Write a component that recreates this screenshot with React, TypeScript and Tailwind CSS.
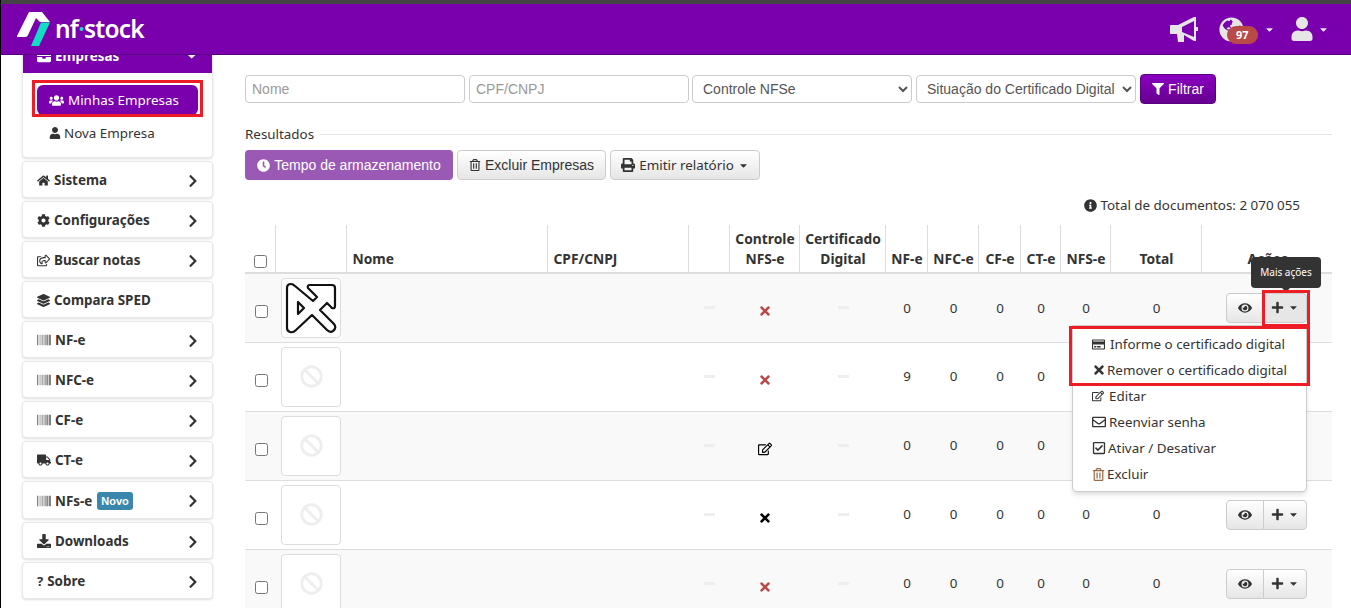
import {
  FaBan,
  FaBarcode,
  FaBriefcase,
  FaCaretDown,
  FaChevronRight,
  FaClock,
  FaCog,
  FaDownload,
  FaEye,
  FaFilter,
  FaGlobeAmericas,
  FaHome,
  FaInfoCircle,
  FaLayerGroup,
  FaPlus,
  FaPrint,
  FaRegCheckSquare,
  FaRegCreditCard,
  FaRegEdit,
  FaRegEnvelope,
  FaRegShareSquare,
  FaRegTrashAlt,
  FaTimes,
  FaTruck,
  FaUser,
  FaUsers,
} from "react-icons/fa";
import type { ReactNode } from "react";

const barcode = <FaBarcode className="text-[14px] text-[#555555]" />;

const menu: { icon: ReactNode; label: string; badge?: boolean; noArrow?: boolean }[] = [
  { icon: <FaHome />, label: "Sistema" },
  { icon: <FaCog />, label: "Configurações" },
  { icon: <FaRegShareSquare />, label: "Buscar notas" },
  { icon: <FaLayerGroup />, label: "Compara SPED", noArrow: true },
  { icon: barcode, label: "NF-e" },
  { icon: barcode, label: "NFC-e" },
  { icon: barcode, label: "CF-e" },
  { icon: <FaTruck className="text-[14px]" />, label: "CT-e" },
  { icon: barcode, label: "NFs-e", badge: true },
  { icon: <FaDownload className="text-[14px]" />, label: "Downloads" },
  { icon: <span className="font-bold">?</span>, label: "Sobre" },
];

const columns = [
  { label: "", w: "w-[30px]" },
  { label: "", w: "w-[71px]" },
  { label: "Nome", w: "w-[201px]", left: true },
  { label: "CPF/CNPJ", w: "w-[141px]", left: true },
  { label: "", w: "w-[41px]" },
  { label: "Controle NFS-e", w: "w-[70px]" },
  { label: "Certificado Digital", w: "w-[86px]" },
  { label: "NF-e", w: "w-[42px]" },
  { label: "NFC-e", w: "w-[51px]" },
  { label: "CF-e", w: "w-[42px]" },
  { label: "CT-e", w: "w-[40px]" },
  { label: "NFS-e", w: "w-[50px]" },
  { label: "Total", w: "w-[91px]" },
  { label: "Ações", w: "w-[131px]" },
];

const rows = [
  { logo: true, control: "red", nfe: 0 },
  { logo: false, control: "red", nfe: 9 },
  { logo: false, control: "edit", nfe: 0 },
  { logo: false, control: "black", nfe: 0 },
  { logo: false, control: "red", nfe: 0 },
];

const menuItems = [
  { icon: <FaRegCreditCard className="text-[13px]" />, label: "Informe o certificado digital", gap: "gap-[5px]" },
  { icon: <FaTimes className="text-[14px]" />, label: "Remover o certificado digital", gap: "gap-[1px]" },
  { icon: <FaRegEdit className="text-[12px]" />, label: "Editar", gap: "gap-[5px]" },
  { icon: <FaRegEnvelope className="text-[14px]" />, label: "Reenviar senha", gap: "gap-[3px]" },
  { icon: <FaRegCheckSquare className="text-[14px]" />, label: "Ativar / Desativar", gap: "gap-[2px]" },
  { icon: <FaRegTrashAlt className="text-[13px] text-[#9a6a45]" />, label: "Excluir", gap: "gap-[2px]" },
];

const Dash = () => <div className="mx-auto h-[3px] w-[11px] bg-[#eeeeee]" />;

const Logo = () => (
  <svg width="34" height="36" viewBox="0 0 34 36">
    <path d="M1 25 L13 1 H26 L34 11 H24 L20 7 L12 24 Q11.5 26 9 26 H1 Z" fill="#ffffff" />
    <path d="M34 11.5 L23 35 H15 L25 11.5 Z" fill="#12dcc4" />
  </svg>
);

const Bullhorn = () => (
  <svg width="28" height="25" viewBox="0 0 28 25" className="mr-[21px]">
    <path
      fillRule="evenodd"
      fill="#e6e6e6"
      d="M0 9 Q0 8 1 8 H8 L24 0 H26 V10 H28 V14 H26 V24 H24 L14 18 V25 H8 L7 17 H1 Q0 17 0 16 Z M24 4 L12 10 V15 L24 20 Z"
    />
  </svg>
);

const Sample = () => (
  <svg width="52" height="52" viewBox="0 0 52 52" fill="none" stroke="#111" strokeWidth="2.2" strokeLinejoin="round">
    <path d="M2 6 Q2 2 6 2 Q8 2 10 4 L28 19 L32 15 L23 6 Q22 3 25 3 H47 Q50 3 50 6 V24 Q50 27 47 26 L42 21 L35 28 L49 42 Q52 46 48 49 Q45 51 42 48 L27 33 L11 48 Q8 51 5 50 Q2 49 2 46 Z" />
    <path d="M13 20 V32 L19 26 Z" />
  </svg>
);

const App = () => {
  return (
    <div className="relative h-[608px] w-[1351px] overflow-hidden border-l border-black bg-white font-['Noto_Sans','Open_Sans',sans-serif] text-[13.4px] text-[#333333]">
      <div className="h-[4px] bg-[#444444]" />
      <header className="relative z-10 flex h-[51px] items-center justify-between border-b border-[#5b0080] bg-[#7a00ad] pl-[15px] pr-[22px]">
        <div className="flex items-center gap-[5px]">
          <Logo />
          <span className="text-[24.5px] font-semibold leading-none tracking-[-0.8px] text-white">
            nf<span className="text-[#12dcc4]">·</span>stock
          </span>
        </div>
        <div className="flex items-center text-[#e6e6e6]">
          <Bullhorn />
          <div className="relative mr-[15px] flex items-center">
            <FaGlobeAmericas className="text-[25px]" />
            <span className="absolute left-[8px] top-[9px] rounded-[9px] bg-[#b94a48] px-[9px] text-[11px] font-bold leading-[18px] text-white">97</span>
            <FaCaretDown className="ml-[20px] text-[11px]" />
          </div>
          <FaUser className="text-[24px]" />
          <FaCaretDown className="ml-[4px] text-[11px]" />
        </div>
      </header>

      <div className="flex">
        <aside className="z-0 ml-[21px] -mt-[23px] flex w-[191px] shrink-0 flex-col gap-[3px]">
          <div className="h-[126px] rounded border border-[#e8e8e8] bg-white shadow-sm">
            <div className="flex h-[40px] items-center justify-between bg-[#7a00ad] px-[14px] pt-[6px] font-bold text-white">
              <span className="flex items-center gap-[4px]">
                <FaBriefcase className="text-[14px]" />
                Empresas
              </span>
              <FaCaretDown />
            </div>
            <div className="mx-[14px] mt-[12px] flex h-[30px] items-center gap-[4px] rounded-md bg-[#7a00ad] pl-[12px] text-white">
              <FaUsers className="text-[15px]" />
              Minhas Empresas
            </div>
            <div className="mt-[3px] flex h-[30px] items-center gap-[3px] pl-[26px]">
              <FaUser className="text-[12px]" />
              Nova Empresa
            </div>
          </div>
          {menu.map((item) => (
            <div
              key={item.label}
              className={`flex ${item.badge ? "h-[38px]" : "h-[37px]"} items-center justify-between rounded border border-[#e8e8e8] bg-white pl-[14px] pr-[12px] pt-[2px] font-bold shadow-sm`}
            >
              <span className="flex items-center gap-[4px]">
                <span className="text-[13px]">{item.icon}</span>
                {item.label}
                {item.badge && (
                  <span className="ml-[1px] rounded-[3px] bg-[#3a87ad] px-[4px] font-['Liberation_Sans',sans-serif] text-[11px] font-bold leading-[18px] text-white">Novo</span>
                )}
              </span>
              {!item.noArrow && <FaChevronRight className="text-[14px]" />}
            </div>
          ))}
        </aside>

        <main className="ml-[32px] w-[1087px] shrink-0 pt-[20px]">
          <div className="flex h-[28px] gap-[4px] font-['Liberation_Sans',sans-serif] text-sm">
            <input placeholder="Nome" className="h-[28px] w-[220px] rounded border border-[#cccccc] px-[6px] placeholder:text-[#999999]" />
            <input placeholder="CPF/CNPJ" className="h-[28px] w-[220px] rounded border border-[#cccccc] px-[6px] placeholder:text-[#999999]" />
            <select className="-ml-px h-[28px] w-[220px] rounded border border-[#cccccc] bg-white pl-[6px] text-[#555555]">
              <option>Controle NFSe</option>
            </select>
            <select className="h-[28px] w-[220px] rounded border border-[#cccccc] bg-white pl-[6px] text-[#555555]">
              <option>Situação do Certificado Digital</option>
            </select>
            <button className="flex h-[30px] w-[76px] -translate-y-px items-center justify-center gap-[4px] rounded border border-[#5b0080] bg-gradient-to-b from-[#8a00c0] to-[#66008f] text-white">
              <FaFilter className="text-[12px]" />
              Filtrar
            </button>
          </div>

          <div className="mt-[21px] flex h-[20px] items-center gap-[5px]">
            <span>Resultados</span>
            <div className="h-px flex-1 bg-[#e5e5e5]" />
          </div>

          <div className="mt-[6px] flex h-[30px] gap-[4px]">
            <button className="flex w-[208px] items-center justify-center gap-[4px] rounded bg-[#9b59b6] font-['Liberation_Sans',sans-serif] text-sm text-white">
              <FaClock className="text-[13px]" />
              Tempo de armazenamento
            </button>
            <button className="flex w-[149px] items-center justify-center gap-[4px] rounded border border-[#cccccc] bg-gradient-to-b from-white to-[#e6e6e6] font-['Liberation_Sans',sans-serif] text-sm">
              <FaRegTrashAlt className="text-[12px]" />
              Excluir Empresas
            </button>
            <button className="flex w-[150px] items-center justify-center gap-[4px] rounded border border-[#cccccc] bg-gradient-to-b from-white to-[#e6e6e6]">
              <FaPrint className="text-[14px]" />
              Emitir relatório
              <FaCaretDown className="text-[11px]" />
            </button>
          </div>

          <div className="mt-[15px] flex h-[20px] items-center justify-end gap-[3px] pr-[32px]">
            <FaInfoCircle className="text-[13px]" />
            Total de documentos: 2 070 055
          </div>

          <table className="mt-[10px] w-[1087px] table-fixed">
            <thead>
              <tr className="h-[48px] border-b-2 border-[#dddddd]">
                {columns.map((col, i) => (
                  <th
                    key={i}
                    className={`${col.w} ${i > 0 ? "border-l border-[#dddddd]" : ""} ${col.left ? "px-[6px] text-left" : "pl-[2px] text-center"} pb-[3px] align-bottom text-[13.8px] font-bold leading-[20px]`}
                  >
                    {i === 0 ? <input type="checkbox" className="mx-auto mb-[1px] block" /> : col.label}
                  </th>
                ))}
              </tr>
            </thead>
            <tbody>
              {rows.map((row, i) => (
                <tr key={i} className={`h-[69px] border-b border-[#dddddd] ${i % 2 === 0 ? "bg-[#f9f9f9]" : "bg-white"}`}>
                  <td className="pl-[2px] text-center">
                    <input type="checkbox" className="mx-auto mt-[8px] block" />
                  </td>
                  <td className="px-[6px]">
                    <div className="flex h-[60px] w-[60px] items-center justify-center rounded border border-[#dddddd] bg-white">
                      {row.logo ? <Sample /> : <FaBan className="text-[23px] text-[#eeeeee]" />}
                    </div>
                  </td>
                  <td />
                  <td />
                  <td className="pl-[2px]"><Dash /></td>
                  <td className="pl-[2px]">
                    <div className="mt-[6px] flex justify-center">
                      {row.control === "red" && <FaTimes className="text-[14px] text-[#b94a48]" />}
                      {row.control === "black" && <FaTimes className="text-[14px] text-black" />}
                      {row.control === "edit" && <FaRegEdit className="text-[14px] text-black" />}
                    </div>
                  </td>
                  <td className="pl-[2px]"><Dash /></td>
                  <td className="pl-[2px] text-center">{row.nfe}</td>
                  <td className="pl-[2px] text-center">0</td>
                  <td className="pl-[2px] text-center">0</td>
                  <td className="pl-[2px] text-center">0</td>
                  <td className="pl-[2px] text-center">0</td>
                  <td className="pl-[2px] text-center">0</td>
                  <td>
                    <div className="ml-[25px] flex h-[30px] w-[81px]">
                      <button className="flex w-[38px] items-center justify-center rounded-l border border-[#cccccc] bg-gradient-to-b from-white to-[#e6e6e6]">
                        <FaEye className="text-[14px]" />
                      </button>
                      <button className={`-ml-px flex flex-1 items-center justify-center gap-[4px] rounded-r border border-[#cccccc] ${i === 0 ? "bg-[#e6e6e6]" : "bg-gradient-to-b from-white to-[#e6e6e6]"}`}>
                        <FaPlus className="text-[13px]" />
                        <FaCaretDown className="text-[11px]" />
                      </button>
                    </div>
                  </td>
                </tr>
              ))}
            </tbody>
          </table>
        </main>
      </div>

      {/* Tooltip */}
      <div className="absolute left-[1250px] top-[257px] z-20 flex h-[31px] w-[70px] items-center justify-center rounded bg-[#333333] text-[10px] text-white">
        Mais ações
        <div className="absolute -bottom-[4px] left-1/2 h-0 w-0 -translate-x-1/2 border-x-[4px] border-t-[4px] border-x-transparent border-t-[#333333]" />
      </div>

      {/* Dropdown */}
      <div className="absolute left-[1071px] top-[325px] z-20 w-[235px] rounded-b border border-[#cccccc] bg-white pb-[4px] pt-[5px] shadow-md">
        {menuItems.map((item) => (
          <div key={item.label} className={`flex h-[26px] items-center ${item.gap} pl-[19px]`}>
            {item.icon}
            {item.label}
          </div>
        ))}
      </div>

      {/* Red highlight boxes */}
      <div className="pointer-events-none absolute left-[31px] top-[80px] z-30 h-[37px] w-[171px] border-[3px] border-[#ee1c25]" />
      <div className="pointer-events-none absolute left-[1261px] top-[290px] z-30 h-[37px] w-[48px] border-[3px] border-[#ee1c25]" />
      <div className="pointer-events-none absolute left-[1068px] top-[326px] z-30 h-[60px] w-[241px] border-[3px] border-[#ee1c25]" />
    </div>
  );
};

export default App;
